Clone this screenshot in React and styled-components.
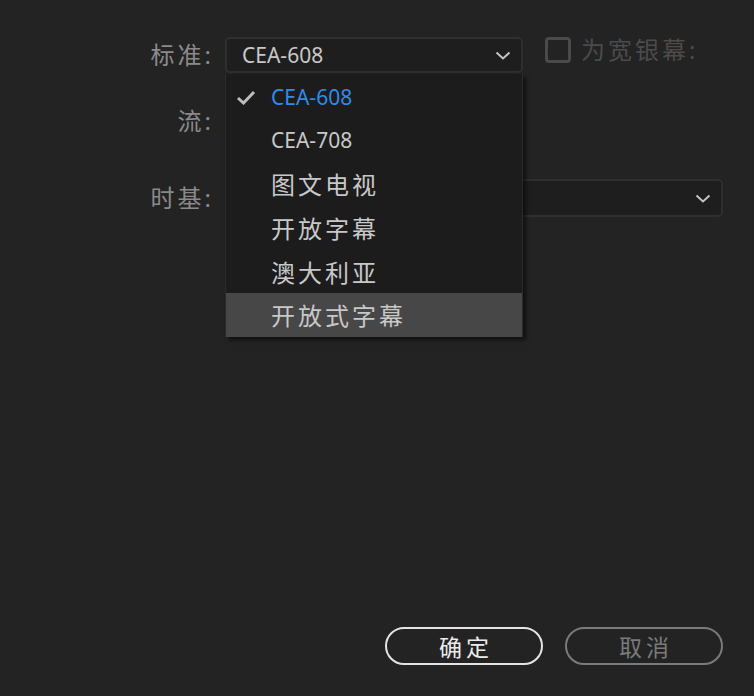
import React from 'react';
import styled, { createGlobalStyle } from 'styled-components';

const GlobalStyle = createGlobalStyle`
    html, body {
        margin: 0;
        padding: 0;
        background: #232323;
    }
    * {
        box-sizing: border-box;
    }
`;

const options = [
    { label: 'CEA-608', cjk: false },
    { label: 'CEA-708', cjk: false },
    { label: '图文电视', cjk: true },
    { label: '开放字幕', cjk: true },
    { label: '澳大利亚', cjk: true },
    { label: '开放式字幕', cjk: true },
];

const Dialog = styled.div`
    position: relative;
    display: flex;
    flex-direction: column;
    width: 754px;
    height: 696px;
    padding: 37px 31px 31px 0;
    background: #232323;
    font-family: "Noto Sans", "Noto Sans CJK SC", sans-serif;
    overflow: hidden;
`;

const Row = styled.div`
    display: flex;
    align-items: center;
    height: ${props => props.height || 36}px;
    margin-top: ${props => props.gap || 0}px;
`;

const Label = styled.div`
    width: 225px;
    flex: none;
    padding-right: 11px;
    text-align: right;
    font-size: 24px;
    letter-spacing: 3px;
    color: #8a8a8a;
    line-height: 1;
`;

const Select = styled.div`
    display: flex;
    align-items: center;
    justify-content: space-between;
    width: ${props => (props.grow ? 'auto' : '298px')};
    flex: ${props => (props.grow ? 1 : 'none')};
    height: 100%;
    padding: 0 10px 0 15px;
    background: #1e1e1e;
    border: 2px solid #2f2f2f;
    border-radius: 5px;
    color: #c8c8c8;
    font-size: 21px;
`;

const Chevron = () => (
    <svg width="16" height="9" viewBox="0 0 16 9">
        <path d="M1.5 1.5 L8 7.5 L14.5 1.5" fill="none" stroke="#c4c4c4" strokeWidth="2" />
    </svg>
);

const CheckField = styled.div`
    display: flex;
    align-items: center;
    align-self: flex-start;
    margin-left: 22px;
`;

const CheckBox = styled.div`
    width: 26px;
    height: 26px;
    border: 3px solid #4a4a4a;
    border-radius: 4px;
    margin-right: 10px;
`;

const CheckLabel = styled.span`
    font-size: 24px;
    letter-spacing: 3px;
    color: #4b4b4b;
    line-height: 26px;
`;

const Menu = styled.div`
    position: absolute;
    left: 225px;
    top: 74px;
    width: 298px;
    background: #1c1c1c;
    border-left: 1px solid #2c2c2c;
    border-right: 1px solid #2c2c2c;
    box-shadow: 3px 3px 4px rgba(0, 0, 0, 0.55);
    padding-top: 1px;
`;

const MenuItem = styled.div`
    position: relative;
    display: flex;
    align-items: center;
    height: 43.6px;
    padding-left: 45px;
    background: ${props => (props.hover ? '#474747' : 'transparent')};
    color: ${props => (props.selected ? '#2d8ceb' : '#c8c8c8')};
    font-size: ${props => (props.cjk ? '24px' : '21px')};
    letter-spacing: ${props => (props.cjk ? '3px' : '0')};
`;

const Check = styled.svg`
    position: absolute;
    left: 10px;
    top: 15px;
`;

const Footer = styled.div`
    display: flex;
    justify-content: flex-end;
    gap: 22px;
    margin-top: auto;
`;

const Button = styled.div`
    display: flex;
    align-items: center;
    justify-content: center;
    width: 158px;
    height: 38px;
    border: 2.5px solid ${props => (props.primary ? '#e4e4e4' : '#7a7a7a')};
    border-radius: 19px;
    color: ${props => (props.primary ? '#ececec' : '#7a7a7a')};
    font-size: 23px;
    letter-spacing: 4px;
    padding-left: 4px;
`;

export default function App() {
    return (
        <>
            <GlobalStyle />
            <Dialog>
                <Row>
                    <Label>标准:</Label>
                    <Select>
                        <span>CEA-608</span>
                        <Chevron />
                    </Select>
                    <CheckField>
                        <CheckBox />
                        <CheckLabel>为宽银幕:</CheckLabel>
                    </CheckField>
                </Row>
                <Row gap={30}>
                    <Label>流:</Label>
                    <Select>
                        <span />
                        <Chevron />
                    </Select>
                </Row>
                <Row gap={40} height={38}>
                    <Label>时基:</Label>
                    <Select grow>
                        <span />
                        <Chevron />
                    </Select>
                </Row>
                <Footer>
                    <Button primary>确定</Button>
                    <Button>取消</Button>
                </Footer>
                <Menu>
                    {options.map((item, index) => (
                        <MenuItem
                            key={item.label}
                            cjk={item.cjk}
                            selected={index === 0}
                            hover={index === options.length - 1}
                        >
                            {index === 0 && (
                                <Check width="20" height="15" viewBox="0 0 20 15">
                                    <path d="M2 8 L7.5 13 L18 2" fill="none" stroke="#bdbdbd" strokeWidth="3" />
                                </Check>
                            )}
                            {item.label}
                        </MenuItem>
                    ))}
                </Menu>
            </Dialog>
        </>
    );
}
